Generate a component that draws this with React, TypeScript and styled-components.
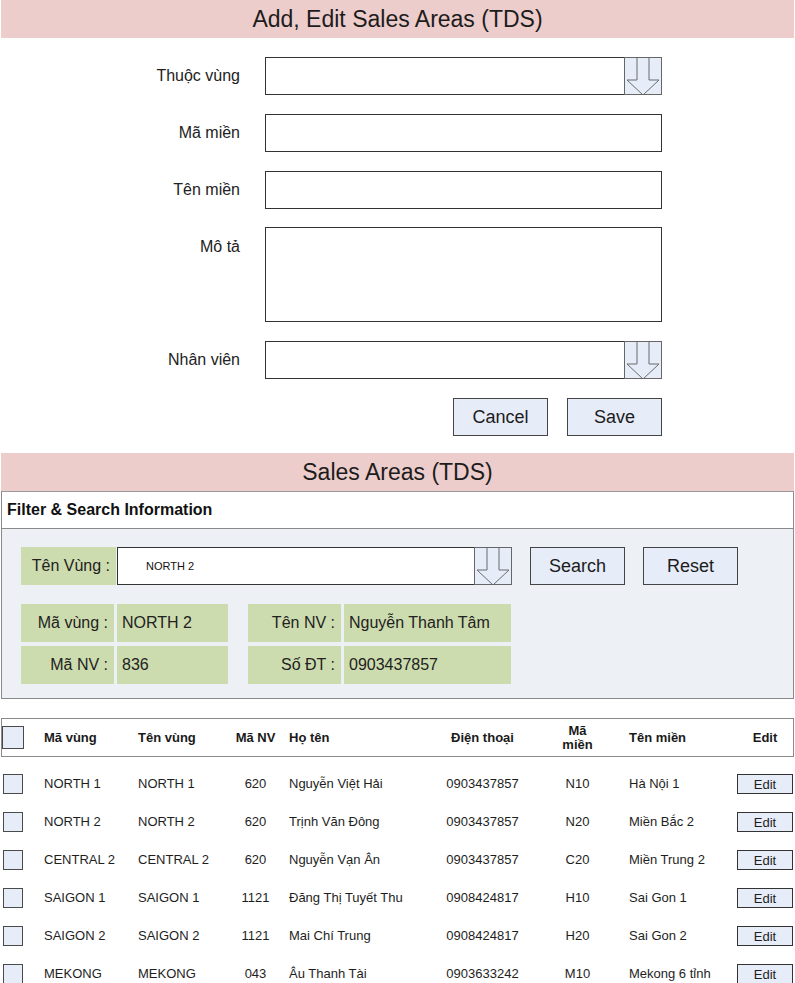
import React from 'react';
import styled, { createGlobalStyle } from 'styled-components';

const GlobalStyle = createGlobalStyle`
    html, body {
        margin: 0;
        padding: 0;
        background: #ffffff;
    }
    body {
        font-family: "Liberation Sans", Arial, sans-serif;
        color: #1e1e1e;
    }
    * {
        box-sizing: border-box;
    }
`;

const Page = styled.div`
    width: 795px;
    padding: 0 1px;
    overflow: hidden;
`;

const TitleBar = styled.div<{ $gap?: number }>`
    height: 38px;
    margin-top: ${(p) => p.$gap || 0}px;
    display: flex;
    align-items: center;
    justify-content: center;
    background: #eccdcb;
    font-size: 23px;
    color: #1c1c1c;
`;

const Form = styled.div`
    display: grid;
    grid-template-columns: 239px 397px;
    column-gap: 25px;
    row-gap: 19px;
    margin-top: 19px;
`;

const Label = styled.div`
    height: 38px;
    line-height: 37px;
    text-align: right;
    font-size: 16px;
    color: #222;
    align-self: start;
`;

const TextInput = styled.div`
    height: 38px;
    background: #fff;
    border: 1px solid #333;
`;

const TextArea = styled.div`
    height: 95px;
    margin-top: -1px;
    background: #fff;
    border: 1px solid #333;
`;

const Select = styled.div<{ $width?: number }>`
    display: flex;
    height: 38px;
    width: ${(p) => (p.$width ? `${p.$width}px` : 'auto')};
`;

const SelectField = styled.div`
    flex: 1;
    display: flex;
    align-items: center;
    padding-left: 28px;
    background: #fff;
    border: 1px solid #333;
    border-right: none;
    font-size: 11px;
    color: #111;
`;

const SelectButton = styled.div`
    width: 38px;
    height: 38px;
    background: #e6ecf8;
    border: 1px solid #666;
    svg {
        display: block;
    }
`;

const ButtonRow = styled.div`
    grid-column: 2;
    display: flex;
    justify-content: flex-end;
    gap: 19px;
`;

const Button = styled.div`
    width: 95px;
    height: 38px;
    display: flex;
    align-items: center;
    justify-content: center;
    background: #e6ecf8;
    border: 1px solid #444;
    font-size: 18px;
    color: #1c1c1c;
`;

const FilterPanel = styled.div`
    border: 1px solid #8a8a8a;
    border-top-color: #9a9a9a;
`;

const FilterTitle = styled.div`
    height: 37px;
    display: flex;
    align-items: center;
    padding-left: 5px;
    background: #fff;
    border-bottom: 1px solid #8a8a8a;
    font-size: 16px;
    font-weight: bold;
    color: #111;
`;

const FilterBody = styled.div`
    background: #edf0f5;
    padding: 18px 19px 14px;
`;

const SearchRow = styled.div`
    display: flex;
    align-items: center;
    gap: 18px;
`;

const SearchField = styled.div`
    display: flex;
    gap: 1px;
`;

const GreenLabel = styled.div<{ $width: number }>`
    width: ${(p) => p.$width}px;
    height: 38px;
    display: flex;
    align-items: center;
    justify-content: flex-end;
    padding-right: 6px;
    background: #cddcae;
    font-size: 16px;
    color: #222;
`;

const GreenValue = styled.div<{ $width: number }>`
    width: ${(p) => p.$width}px;
    height: 38px;
    display: flex;
    align-items: center;
    padding-left: 5px;
    background: #cddcae;
    font-size: 16px;
    color: #222;
`;

const InfoGrid = styled.div`
    display: flex;
    gap: 20px;
    margin-top: 19px;
`;

const InfoGroup = styled.div`
    display: grid;
    grid-template-columns: auto auto;
    gap: 4px 3px;
`;

const Table = styled.div`
    margin-top: 19px;
`;

const columns = '42px 94px 92px 51px 149px 105px 85px 117px 1fr';

const HeaderRow = styled.div`
    display: grid;
    grid-template-columns: ${columns};
    align-items: center;
    height: 39px;
    border: 1px solid #8a8a8a;
    font-size: 13px;
    font-weight: bold;
    color: #1a1a1a;
`;

const Body = styled.div`
    padding: 8px 1px 0;
`;

const Row = styled.div`
    display: grid;
    grid-template-columns: ${columns};
    align-items: center;
    height: 38px;
    font-size: 13px;
    color: #1e1e1e;
`;

const Cell = styled.div<{ $align?: 'left' | 'center'; $pad?: number }>`
    text-align: ${(p) => p.$align || 'left'};
    padding-left: ${(p) => p.$pad || 0}px;
    white-space: nowrap;
    line-height: 14px;
`;

const Checkbox = styled.div<{ $big?: boolean }>`
    width: ${(p) => (p.$big ? 22 : 20)}px;
    height: ${(p) => (p.$big ? 23 : 20)}px;
    margin-left: ${(p) => (p.$big ? 0 : 1)}px;
    background: #e6ecf8;
    border: 1px solid #4a4a4a;
`;

const EditButton = styled.div`
    height: 20px;
    display: flex;
    align-items: center;
    justify-content: center;
    background: #e6ecf8;
    border: 1px solid #333;
    font-size: 13px;
    color: #1e1e1e;
`;

const DownArrow = () => (
    <svg width="36" height="36" viewBox="1 1 36 36">
        <path d="M13 0 V23 H3 L19 38 L35 23 H25 V0" fill="none" stroke="#6b6b6b" strokeWidth="1" />
    </svg>
);

const rows = [
    ['NORTH 1', 'NORTH 1', '620', 'Nguyễn Việt Hải', '0903437857', 'N10', 'Hà Nội 1'],
    ['NORTH 2', 'NORTH 2', '620', 'Trịnh Văn Đông', '0903437857', 'N20', 'Miền Bắc 2'],
    ['CENTRAL 2', 'CENTRAL 2', '620', 'Nguyễn Vạn Ân', '0903437857', 'C20', 'Miền Trung 2'],
    ['SAIGON 1', 'SAIGON 1', '1121', 'Đăng Thị Tuyết Thu', '0908424817', 'H10', 'Sai Gon 1'],
    ['SAIGON 2', 'SAIGON 2', '1121', 'Mai Chí Trung', '0908424817', 'H20', 'Sai Gon 2'],
    ['MEKONG', 'MEKONG', '043', 'Âu Thanh Tài', '0903633242', 'M10', 'Mekong 6 tỉnh'],
];

const App = () => {
    return (
        <>
            <GlobalStyle />
            <Page>
                <TitleBar>Add, Edit Sales Areas (TDS)</TitleBar>
                <Form>
                    <Label>Thuộc vùng</Label>
                    <Select>
                        <SelectField />
                        <SelectButton><DownArrow /></SelectButton>
                    </Select>
                    <Label>Mã miền</Label>
                    <TextInput />
                    <Label>Tên miền</Label>
                    <TextInput />
                    <Label>Mô tả</Label>
                    <TextArea />
                    <Label>Nhân viên</Label>
                    <Select>
                        <SelectField />
                        <SelectButton><DownArrow /></SelectButton>
                    </Select>
                    <ButtonRow>
                        <Button>Cancel</Button>
                        <Button>Save</Button>
                    </ButtonRow>
                </Form>

                <TitleBar $gap={17}>Sales Areas (TDS)</TitleBar>
                <FilterPanel>
                    <FilterTitle>Filter &amp; Search Information</FilterTitle>
                    <FilterBody>
                        <SearchRow>
                            <SearchField>
                                <GreenLabel $width={95}>Tên Vùng :</GreenLabel>
                                <Select $width={395}>
                                    <SelectField>NORTH 2</SelectField>
                                    <SelectButton><DownArrow /></SelectButton>
                                </Select>
                            </SearchField>
                            <Button>Search</Button>
                            <Button>Reset</Button>
                        </SearchRow>
                        <InfoGrid>
                            <InfoGroup>
                                <GreenLabel $width={93}>Mã vùng :</GreenLabel>
                                <GreenValue $width={111}>NORTH 2</GreenValue>
                                <GreenLabel $width={93}>Mã NV :</GreenLabel>
                                <GreenValue $width={111}>836</GreenValue>
                            </InfoGroup>
                            <InfoGroup>
                                <GreenLabel $width={93}>Tên NV :</GreenLabel>
                                <GreenValue $width={167}>Nguyễn Thanh Tâm</GreenValue>
                                <GreenLabel $width={93}>Số ĐT :</GreenLabel>
                                <GreenValue $width={167}>0903437857</GreenValue>
                            </InfoGroup>
                        </InfoGrid>
                    </FilterBody>
                </FilterPanel>

                <Table>
                    <HeaderRow>
                        <Checkbox $big />
                        <Cell>Mã vùng</Cell>
                        <Cell>Tên vùng</Cell>
                        <Cell $align="center">Mã NV</Cell>
                        <Cell $pad={8}>Họ tên</Cell>
                        <Cell $align="center">Điện thoại</Cell>
                        <Cell $align="center">Mã<br />miền</Cell>
                        <Cell $pad={9}>Tên miền</Cell>
                        <Cell $align="center">Edit</Cell>
                    </HeaderRow>
                    <Body>
                        {rows.map((r) => (
                            <Row key={r[0]}>
                                <Checkbox />
                                <Cell>{r[0]}</Cell>
                                <Cell>{r[1]}</Cell>
                                <Cell $align="center">{r[2]}</Cell>
                                <Cell $pad={8}>{r[3]}</Cell>
                                <Cell $align="center">{r[4]}</Cell>
                                <Cell $align="center">{r[5]}</Cell>
                                <Cell $pad={9}>{r[6]}</Cell>
                                <EditButton>Edit</EditButton>
                            </Row>
                        ))}
                    </Body>
                </Table>
            </Page>
        </>
    );
};

export default App;
